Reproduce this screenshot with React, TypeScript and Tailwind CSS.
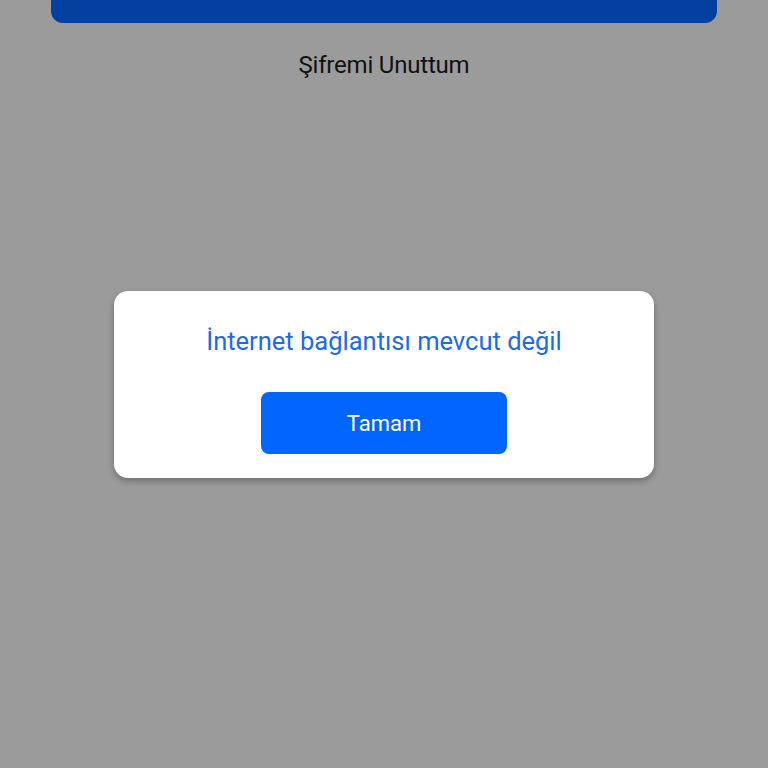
export default function App() {
  return (
    <div className="min-h-[768px] w-full bg-[#9b9b9b] font-['Roboto',sans-serif] flex flex-col items-center">
      <div className="self-stretch mx-[51px] h-[23px] rounded-b-[12px] bg-[#0340a0]" />
      <p className="mt-[27px] text-[24px] leading-[30px] text-[#111] tracking-[-0.2px]">Şifremi Unuttum</p>

      <div className="mt-[211px] w-[540px] h-[187px] rounded-[14px] bg-white shadow-[0_3px_6px_rgba(0,0,0,0.3)] flex flex-col items-center pt-[33px]">
        <p className="text-[25.5px] leading-[34px] text-[#1a6ce8]">İnternet bağlantısı mevcut değil</p>
        <button className="mt-[34px] w-[246px] h-[62px] rounded-[8px] bg-[#0066ff] text-white text-[22px]">Tamam</button>
      </div>
    </div>
  );
}
